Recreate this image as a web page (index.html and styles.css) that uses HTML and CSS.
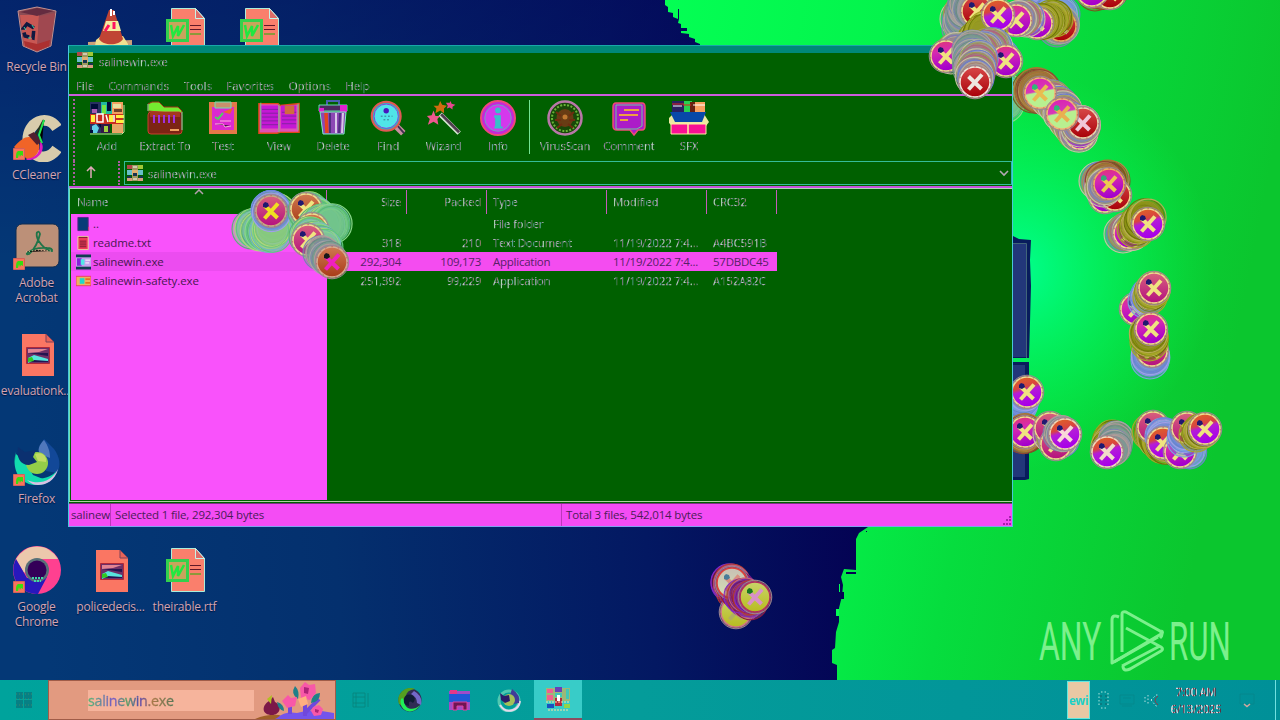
FILE: index.html
```html
<!DOCTYPE html>
<html lang="en">
<head>
<meta charset="utf-8">
<title>salinewin.exe</title>
<link rel="stylesheet" href="styles.css">
</head>
<body>
<svg class="defs" width="0" height="0" aria-hidden="true">
  <defs>
    <linearGradient id="g-violet" x1="0" y1="0" x2=".25" y2="1"><stop offset="0" stop-color="#e0386a"/><stop offset=".4" stop-color="#d62ab0"/><stop offset="1" stop-color="#a400cc"/></linearGradient>
    <linearGradient id="g-orange" x1="0" y1="0" x2=".3" y2="1"><stop offset="0" stop-color="#e06a20"/><stop offset=".42" stop-color="#d84440"/><stop offset=".55" stop-color="#b41cd8"/><stop offset="1" stop-color="#a800e8"/></linearGradient>
    <linearGradient id="g-red" x1="0" y1="0" x2="0" y2="1"><stop offset="0" stop-color="#d84848"/><stop offset="1" stop-color="#a80008"/></linearGradient>
    <linearGradient id="g-mint" x1="0" y1="0" x2=".2" y2="1"><stop offset="0" stop-color="#d820b0"/><stop offset=".5" stop-color="#d838b8"/><stop offset=".56" stop-color="#b8f090"/><stop offset="1" stop-color="#b8f090"/></linearGradient>
    <linearGradient id="g-pink" x1="0" y1="0" x2="0" y2="1"><stop offset="0" stop-color="#d8607c"/><stop offset="1" stop-color="#b41080"/></linearGradient>
    <linearGradient id="g-rust" x1="0" y1="0" x2="0" y2="1"><stop offset="0" stop-color="#d07850"/><stop offset="1" stop-color="#a83c18"/></linearGradient>
    <linearGradient id="g-lime" x1="0" y1="0" x2="0" y2="1"><stop offset="0" stop-color="#c8d468"/><stop offset="1" stop-color="#b8bc20"/></linearGradient>
    <linearGradient id="g-pale" x1="0" y1="0" x2="0" y2="1"><stop offset="0" stop-color="#c8c0b4"/><stop offset="1" stop-color="#d4e0b4"/></linearGradient>

    <symbol id="rar" viewBox="0 0 36 36">
      <path fill="#283060" d="M1 2h11v31H1z"/><path fill="#20b8a0" d="M12 2h11v16H12z"/><path fill="#f4a060" d="M23 2h11v31H23z"/>
      <path fill="#74e444" d="M13 5h4v9h-4z"/><path fill="#000c38" d="M2 4h7v5H2zM18 2h4v9h-4z"/><path fill="#a858b0" d="M3 9h5v4H3z"/>
      <path fill="#e8e0a0" d="M24 4h8v4h-8z"/><path fill="#704028" d="M25 9h8v3h-8z"/><path fill="#c82c20" d="M1 14h33v10H1z"/><path fill="#fff040" d="M2 15h4v7H2zM20 15h4v7h-4zM27 15h8v3h-8zM27 20h8v3h-8z"/>
      <path fill="none" stroke="#fff" stroke-width="1.500" d="M8 14v8h6v-8zM17 15l2 7M25 15v7"/>
      <path fill="#301848" d="M12 24h9v9h-9z"/><path fill="#60d0e8" d="M3 26l4-2 3 4-2 5H3z"/><path fill="#000c38" d="M1 30h3v3H1zM9 24h3v4z"/><path fill="#a0d040" d="M15 26h4v6h-4z"/><path fill="#e4a868" d="M24 25h9v7h-9z"/>
      <path fill="none" stroke="#c0e0a0" d="M1 34h32l2-2V5"/>
    </symbol>
    <symbol id="rar-small" viewBox="0 0 18 18">
      <path fill="#b04848" d="M1 1h5v4H1z"/><path fill="#a0c838" d="M12 1h5v4h-5z"/><path fill="#a09860" d="M6 1h6v16H6z"/>
      <path fill="#68c0c8" d="M1 6h16v5H1z"/><path fill="#e0b070" d="M6 6h6v5H6z"/><path fill="#183450" d="M1 12h4v2H1zM13 12h4v2h-4zM7 9h4v3H7z"/>
      <path fill="#d89c80" d="M1 14h5v3H1zM12 14h5v3h-5z"/><path stroke="#fff" d="M7 3h4M7 15h4"/>
    </symbol>
    <symbol id="writer" viewBox="0 0 48 48">
      <path fill="#fa7f6c" stroke="#a8eedc" d="M10.500 2.500h24l9 10v33h-33z"/><path fill="#e06c68" stroke="#c8f4e8" d="M34.500 2.500v10h9z"/>
      <path stroke="#601828" d="M29 19.500h11M29 23.500h11"/><path stroke="#68a028" stroke-width="1.500" d="M29 28h11"/>
      <path fill="#34d04c" d="M5 13h23v23H5z"/><path fill="#c8a45c" d="M8 16h17v17H8z"/>
      <path fill="none" stroke="#20e840" stroke-width="2.500" d="M10 19l2 11 5-10v10l6-11"/>
    </symbol>
    <symbol id="picture" viewBox="0 0 48 48">
      <path fill="#fa7663" d="M9 4h24l8 8v34H9z"/><path fill="#e86458" stroke="#7c4058" d="M33 4v8h8z"/>
      <path fill="#6c3068" stroke="#b02838" d="M13.500 17.500h23v16h-23z"/><path fill="#e08494" d="M15 19h20l-9 3-11 1z"/>
      <path fill="#241450" d="M15 23l20 3v-3zM15 30h20v2H15z"/><path fill="#58e4dc" d="M15 28l6-3 14 4v2l-14-1-6 3z"/><path fill="#30c820" d="M15 28l4-1 2 4-6 1z"/>
    </symbol>
    <symbol id="shortcut" viewBox="0 0 12 12"><path fill="#f8745c" stroke="#d46058" d="M.5.5h11v11H.5z"/><path fill="#38dc10" d="M3 10C3 6 3 4 5 3h5v5L8 7 7 9 6 6 5 10z"/></symbol>
    <symbol id="fox" viewBox="0 0 48 48">
      <path fill="#124898" d="M31 1l10 10c6 8 7 17 3 24L33 33l-7-18z"/><path fill="#5078bc" d="M31 2c-5 5-7 10-4 14l10 4c0-7-2-12-6-18z"/>
      <path fill="#12dcae" d="M3 14c-2 17 8 27 20 27 10 0 18-4 20-8-3 12-13 14-20 14C6 47-2 30 3 14z"/>
      <path fill="#12dcae" d="M3 16l11 10 6 11 10 4-12 3C6 39 1 29 3 16z"/>
      <path fill="#d8c0e4" d="M14 42c12 5 24 2 31-11-3 12-12 16-20 16-4 0-8-2-11-5z"/>
      <circle cx="24" cy="25" r="11" fill="#94ce48"/><path fill="#0b3070" d="M5 9l7 5 11-2-3 7 4 5-8 3C7 27 3 19 5 9z"/><path fill="#c0dc64" d="M22 16c8-3 12 3 11 8l-8-1z"/>
    </symbol>
    <symbol id="fox-small" viewBox="0 0 24 24">
      <circle cx="12" cy="13" r="10" fill="none" stroke="#50c8b0" stroke-width="3"/><path fill="none" stroke="#e4d8ec" stroke-width="2" d="M3 17q5 8 13 5 6-2 7-9"/>
      <path fill="#403c98" d="M15 1q9 6 7 14l-6 1-3-9z"/><circle cx="12" cy="12" r="6" fill="#a4c058"/><path fill="#2c1c68" d="M3 5l4 3 5-1 1 6-5 2-4-3z"/>
    </symbol>
  </defs>
</svg>

<div class="screen">
  <main class="desktop">
    <svg class="wallpaper" viewBox="0 0 1280 680" aria-hidden="true">
      <defs>
        <linearGradient id="blue" x1="0" y1="0" x2="840" y2="-60" gradientUnits="userSpaceOnUse"><stop offset="0" stop-color="#043876"/><stop offset=".35" stop-color="#04306e"/><stop offset=".72" stop-color="#031862"/><stop offset="1" stop-color="#040052"/></linearGradient>
        <linearGradient id="top" x1="0" y1="0" x2="0" y2="1"><stop offset="0" stop-color="#040058" stop-opacity=".35"/><stop offset="1" stop-color="#040058" stop-opacity="0"/></linearGradient>
        <linearGradient id="green" x1="660" y1="0" x2="1280" y2="120" gradientUnits="userSpaceOnUse"><stop offset="0" stop-color="#04ff54"/><stop offset=".35" stop-color="#04f44c"/><stop offset=".62" stop-color="#06dd3e"/><stop offset="1" stop-color="#0bc62e"/></linearGradient>
        <radialGradient id="glow" cx="1015" cy="270" r="200" gradientUnits="userSpaceOnUse"><stop offset="0" stop-color="#00ff90"/><stop offset="1" stop-color="#00ff50" stop-opacity="0"/></radialGradient>
      </defs>
      <path fill="url(#blue)" d="M0 0h1280v680H0z"/><path fill="url(#top)" d="M0 0h1280v260H0z"/>
      <path fill="url(#green)" d="M665 0v5l3 2v5l5 1v4l5 2v-10h1v10l-1 4 3 1v4h6v3h-6v2l8 1v3l6 2v3l5 2v3l6 2V300H868V527L862 531 859 533 856 539 856 570 844 569 841 577 843 585 842 596 839 608 839 622 836 632 835 648 832 650 832 663 837 665 837 680H1280V0z"/>
      <path fill="#040052" d="M846 572h10v2h-10zM841 592h3v7h-3zM862 528h2v1h-2zM866 531h1v1h-1z"/><path fill="#04ff54" d="M839 584h1v8h-1zM836 609h3v7h-3z"/>
      <path fill="url(#glow)" d="M868 45h412v440H868z"/>
      <path fill="#081c5c" d="M1013 236l6 3 12 1-1 20 1 26-1 36-1 36h-16zM1013 362h16v117l-4 1h-12z"/><path fill="#22377a" d="M1013 243h13v114h-13zM1013 365h12v112h-12z"/><path fill="none" stroke="#416579" d="M1013 243.500h13.500V358"/>
    </svg>

    <section class="icons">
      <div class="tile c1 r1"><svg viewBox="0 0 48 48"><path fill="#8c4c54" stroke="#c09090" d="M5 5l19-4 19 4-5 35-14 6-14-6z"/><path fill="#c85854" d="M7 9h19l-2 36-13-5z"/><path fill="#a04850" d="M26 10l16-3-5 33-13 5z"/><path fill="#642c40" d="M7 6l17-4 17 3-17 5z"/><path fill="#ac3030" d="M11 35l13 3 13-4-1 6-12 5-12-5z"/><path fill="none" stroke="#101840" stroke-width="3.500" stroke-dasharray="8 3" d="M14 18l7 4-1 10-8-2-2-7z"/><path stroke="#38d0a0" d="M11 21l2 3M19 19l2 3M15 32h3"/></svg><span>Recycle Bin</span></div>
      <div class="tile c2 r1"><svg viewBox="0 0 48 48"><path fill="#cca078" d="M1 36l44-2v10H1z"/><path fill="#f0e090" d="M9 34l5-4h22l5 8v8H7z"/><path fill="#c04434" d="M22 4h5l9 29c-4 7-20 7-24 0z"/><path fill="#f4eca0" d="M19 15h12l3 10H16z"/><path stroke="#ff1060" stroke-width="3" d="M27 16v7M18 25l4-6"/><path stroke="#fff" stroke-width="2" d="M24 3v7M27 5v4"/></svg></div>
      <div class="tile c3 r1"><svg><use href="#writer"/></svg></div>
      <div class="tile c4 r1"><svg><use href="#writer"/></svg></div>
      <div class="tile c1 r2"><svg viewBox="0 0 48 48"><path fill="none" stroke="#d8ccac" stroke-width="11" d="M44 14C34-1 14 8 15 27c3 18 20 21 29 8"/><path fill="#f06428" d="M1 33c9-10 14-12 21-8 9 5 3 19-7 21z"/><path fill="#dc1cc0" d="M13 45c11-1 15-8 14-18 7 6 0 20-13 19z"/><path stroke="#24341c" stroke-width="2.500" d="M31 6L21 24"/><path fill="#502030" d="M15 21l6-3 8 9-5 4z"/><path stroke="#20e850" stroke-width="2" d="M31 6l-5 15 3 8"/><use href="#shortcut" x="0" y="34" width="12" height="12"/></svg><span>CCleaner</span></div>
      <div class="tile c1 r3"><svg viewBox="0 0 48 48"><rect x="3" y="2" width="43" height="43" rx="6" fill="#bc9078" stroke="#102c50"/><path fill="none" stroke="#207448" stroke-width="1.800" d="M24 11q2-3 3 1-1 5-4 11-3 6-7 9-3 1-2-1 8-6 20-5 6 0 5 3-7 0-14-11-2-5-1-8z"/><path stroke="#f0c8a0" stroke-dasharray="1 2" d="M13 30l11-2 14 1"/><use href="#shortcut" x="0" y="36" width="12" height="12"/></svg><span>Adobe<br>Acrobat</span></div>
      <div class="tile c1 r4"><svg><use href="#picture"/></svg><span>evaluationk...</span></div>
      <div class="tile c1 r5"><svg viewBox="0 0 48 48"><use href="#fox"/><use href="#shortcut" x="0" y="36" width="12" height="12"/></svg><span>Firefox</span></div>
      <div class="tile c1 r6"><svg viewBox="0 0 48 48"><circle cx="24" cy="24" r="24" fill="#ff4090"/><path fill="#ecc8ac" d="M3 13A24 24 0 0 1 45 13H24L11 27z"/><path fill="#2818bc" d="M3 13A24 24 0 0 0 25 48l9-17-20 1z"/><circle cx="24" cy="24" r="12" fill="#587078"/><circle cx="24" cy="24" r="9.500" fill="#340058"/><path stroke="#40d8a8" stroke-width="2" stroke-dasharray="2 1" d="M19 32h11M21 35h7"/><use href="#shortcut" x="0" y="35" width="12" height="12"/></svg><span>Google<br>Chrome</span></div>
      <div class="tile c2 r6"><svg><use href="#picture"/></svg><span>policedecis...</span></div>
      <div class="tile c3 r6"><svg><use href="#writer"/></svg><span>theirable.rtf</span></div>
    </section>

    <svg class="coins" id="coins-behind" viewBox="0 0 1280 680" aria-hidden="true"></svg>

    <section class="window">
      <header class="titlebar"><svg><use href="#rar-small"/></svg><span class="noise">salinewin.exe</span></header>
      <nav class="menu"><span class="noise">File</span><span class="noise">Commands</span><span class="noise">Tools</span><span class="noise">Favorites</span><span class="noise">Options</span><span class="noise">Help</span></nav>
      <div class="toolbar">
        <div class="tool"><svg><use href="#rar"/></svg><span class="noise">Add</span></div>
        <div class="tool"><svg viewBox="0 0 36 36"><path fill="#74ec30" stroke="#a03018" d="M1 11V4l4-2h7l5 5h14l4 4v3z"/><rect x="1" y="12" width="34" height="22" rx="3" fill="#7c2414" stroke="#c8402c"/><path fill="#a43820" d="M3 12h30v5H3z"/><path stroke="#a030e0" stroke-width="2" d="M7 15v8M12 15v8M17 15v8M22 15v8M27 15v8"/><path stroke="#f0a060" stroke-width="2" d="M23 30h9"/><path fill="none" stroke="#70d8a8" d="M1 11V4M35 12v18"/></svg><span class="noise">Extract To</span></div>
        <div class="tool"><svg viewBox="0 0 36 36"><path fill="#e47848" d="M4 2h28v32H4z"/><path fill="#dc28d0" d="M7 7h22v23H7z"/><path fill="#c8906c" stroke="#70e0b0" d="M10 2h16v6H10z"/><path fill="none" stroke="#50d060" stroke-width="2" d="M10 17l3 2 5-6"/><path stroke="#ffb0e0" d="M10 24h8l2 3 6-1M15 21h11"/><path fill="#f06030" d="M18 12l10-4-3 6z"/></svg><span class="noise">Test</span></div>
        <div class="tool"><svg class="wide" viewBox="0 0 46 36"><path fill="#e050b8" stroke="#e04818" stroke-width="1.500" d="M2 3h20l2 2 20-2v30H24l-3 1H2z"/><path fill="#c418d4" d="M4 5h18v24H4zM25 5h16v24H25z"/><path stroke="#8024a0" d="M5 9h17M5 13h17M5 17h17M5 21h17M5 25h17M26 12h15M26 16h15M26 20h15M26 24h15"/><path fill="#d06c40" d="M29 5h10v9H29z"/><path stroke="#70d080" d="M4 2v28M23 4v29M43 3v28"/></svg><span class="noise">View</span></div>
        <div class="tool"><svg viewBox="0 0 36 36"><path fill="none" stroke="#4860b0" stroke-width="2" d="M12 5V1h12v4"/><path fill="#4c2860" stroke="#68d8b0" d="M4 5h28v6H4z"/><path fill="#e020d0" d="M25 5h7v7h-7zM4 8h5v4H4z"/><path fill="#8c48b4" stroke="#84e8c8" d="M5 12h26l-2 22H8z"/><path stroke="#e4441c" stroke-width="3.500" d="M11 13l1 20"/><path stroke="#503080" stroke-width="2" d="M15 13v20M25 13l-1 20"/><path stroke="#d8c8e8" stroke-width="2" d="M21 13v20M28 13l-1 20"/></svg><span class="noise">Delete</span></div>
        <div class="tool"><svg viewBox="0 0 40 38"><path stroke="#c890a0" stroke-width="7" d="M28 27l9 9"/><path stroke="#403050" stroke-width="2" d="M30 27l8 9"/><circle cx="18" cy="17" r="16" fill="#18c8cc" stroke="#e05854" stroke-width="2.500"/><circle cx="18" cy="17" r="13.500" fill="#50e4e8" stroke="#9828d8"/><circle cx="18" cy="11" r="3" fill="#4814c0"/><path stroke="#386888" stroke-dasharray="2 2" d="M12 17h13M15 21h7"/></svg><span class="noise">Find</span></div>
        <div class="tool"><svg viewBox="0 0 38 38"><path stroke="#d8e8d4" stroke-width="5" d="M15 15l20 20"/><path stroke="#504050" stroke-width="3" d="M16 15l19 19"/><path fill="#f05890" d="M8 11l2 6h5l-3 3 1 6-5-3-6 3 2-6-3-3 5-1z"/><path fill="#d06c10" d="M15 1l2 4 5 1-3 3v5l-4-3-5 3 1-5-3-3h5z"/><path fill="#e84890" d="M26 1l1 3 4 1-3 2v3l-3-2-3 1 1-3-2-3h4z"/></svg><span class="noise">Wizard</span></div>
        <div class="tool"><svg viewBox="0 0 38 38"><circle cx="19" cy="19" r="18" fill="#c428d8" stroke="#f04878" stroke-width="2"/><circle cx="19" cy="19" r="14" fill="#d438ec" stroke="#70a0c8"/><circle cx="19" cy="11" r="3" fill="#38c0c8"/><path fill="#38c0c8" d="M15 16h7v12h2v2h-9v-2h1v-9h-1z"/></svg><span class="noise">Info</span></div>
        <i class="divider"></i>
        <div class="tool"><svg viewBox="0 0 36 36"><circle cx="18" cy="18" r="16.500" fill="#184808" stroke="#b878a8" stroke-width="2.500"/><circle cx="18" cy="18" r="13" fill="none" stroke="#68b438" stroke-width="2" stroke-dasharray="2 1.500"/><ellipse cx="18" cy="18" rx="8.500" ry="9" fill="#683c14"/><path stroke="#702c10" stroke-width="2" d="M9 12l5 4M27 12l-5 4M8 20h6M28 20h-6M10 28l5-4M26 28l-5-4"/><circle cx="18" cy="17" r="2.500" fill="#c07830"/></svg><span class="noise">VirusScan</span></div>
        <div class="tool"><svg viewBox="0 0 36 36"><path fill="#ac1cc8" stroke="#f04c74" stroke-width="1.500" d="M5 3h26q3 0 3 4v19q0 4-3 4h-4l-4 5-4-5H6q-4 0-4-4V7q0-4 3-4z"/><path fill="none" stroke="#70c8a0" d="M5 5h26v21l-5 3H5z"/><path stroke="#f0a040" stroke-width="2" d="M13 10h15M8 15h19M9 20h8"/></svg><span class="noise">Comment</span></div>
        <div class="tool"><svg class="wide" viewBox="0 0 42 36"><path fill="#282060" d="M4 1h12v13H4z"/><path fill="#28d050" d="M16 1h8v12h-8z"/><path fill="#682010" d="M22 2h6v12h-6z"/><path fill="#f8a060" d="M27 2h10v13H27z"/><path fill="#ece8a0" d="M1 18l5-5 30 1 5 8-3 4H4l-3-3z"/><path fill="#0848a8" d="M2 12h36l-4 10H7z"/><path fill="#f81094" stroke="#fff0a0" d="M3 24h17v10H3zM20 24h18v10H20z"/><path stroke="#e02020" d="M4 4h12M15 5h8"/><path stroke="#fff" d="M5 6h9M25 5h12"/></svg><span class="noise">SFX</span></div>
      </div>
      <div class="pathbar">
        <div class="up"><svg viewBox="0 0 12 12"><path fill="none" stroke="#e0a8b8" stroke-width="1.500" d="M6 12V2M2 5l4-4 4 4"/></svg></div>
        <div class="address"><svg><use href="#rar-small"/></svg><span class="noise">salinewin.exe</span><svg class="chevron" viewBox="0 0 12 12"><path fill="none" stroke="#b4a8b4" stroke-width="1.600" d="M2 4l4 4 4-4"/></svg></div>
      </div>
      <div class="files">
        <div class="row head noise-cells"><span>Name</span><span>Size</span><span>Packed</span><span>Type</span><span>Modified</span><span>CRC32</span></div>
        <svg class="sort" viewBox="0 0 10 6"><path fill="none" stroke="#b4a0ac" stroke-width="1.500" d="M1 5l4-4 4 4"/></svg>
        <div class="row noise-cells"><span class="name"><svg viewBox="0 0 16 16"><path fill="#083c78" stroke="#582888" d="M2 1h11v14H2z"/><path stroke="#e04070" d="M13.500 11v4"/></svg>..</span><span></span><span></span><span>File folder</span><span></span><span></span></div>
        <div class="row noise-cells"><span class="name"><svg viewBox="0 0 16 16"><path fill="#f03858" stroke="#e8d8a0" d="M2 1h11v14H2z"/><path stroke="#701c30" d="M3 2h9M4 6h7M4 8h7M4 10h7M4 12h7"/></svg>readme.txt</span><span>318</span><span>210</span><span>Text Document</span><span>11/19/2022 7:4...</span><span>A4BC591B</span></div>
        <div class="row selected"><span class="name"><svg viewBox="0 0 16 16"><path fill="#103c50" d="M0 0h16v16H0z"/><path fill="#c8a0ec" d="M0 3h16v10H0z"/><path fill="#8820d8" d="M1 4h5v8H1z"/><path fill="#50e8e8" d="M5 5h4v6H5z"/><path stroke="#fff" d="M10 6h5M10 9h4"/></svg>salinewin.exe</span><span>292,304</span><span>109,173</span><span>Application</span><span>11/19/2022 7:4...</span><span>57DBDC45</span></div>
        <div class="row noise-cells"><span class="name"><svg viewBox="0 0 16 16"><path fill="#f0b060" stroke="#e84060" d="M0 3h16v10H0z"/><path fill="#20d8c8" d="M4 5h5v6H4z"/><path fill="#e87020" d="M10 5h5v2h-5zM10 9h5v2h-5z"/></svg>salinewin-safety.exe</span><span>251,392</span><span>99,229</span><span>Application</span><span>11/19/2022 7:4...</span><span>A152A82C</span></div>
      </div>
      <footer class="status"><span>salinew</span><span>Selected 1 file, 292,304 bytes</span><span>Total 3 files, 542,014 bytes</span><svg viewBox="0 0 10 10"><path fill="#a820b0" d="M7 0h2v2H7zM4 3h2v2H4zM7 3h2v2H7zM1 7h2v2H1zM4 7h2v2H4zM7 7h2v2H7z"/></svg></footer>
    </section>

    <svg class="coins over" id="coins-over" viewBox="0 0 1280 680" aria-hidden="true"></svg>

    <svg class="brand" viewBox="0 0 200 64" role="img" aria-label="ANY RUN">
      <g transform="translate(5 52) scale(.6 1)"><text textLength="104" lengthAdjust="spacingAndGlyphs">ANY</text></g>
      <g transform="translate(135 52) scale(.6 1)"><text textLength="103" lengthAdjust="spacingAndGlyphs">RUN</text></g>
      <path d="M85 9q-7-3-7 3v43l49-29q3-2 0-3"/>
      <path d="M80 54l44-25M88 44V6q0-3 4-2l34 19q4 3 0 7M92 20l35 19q3 2 0 4l-31 18q-7 3-7-3M88 58l38-20"/>
    </svg>
  </main>

  <footer class="taskbar">
    <button class="start" aria-label="Start"><svg viewBox="0 0 18 18"><path fill="#078084" d="M1 1h7v7H1zM9 1h8v7H9zM1 9h7v8H1zM9 9h8v8H9z"/><path stroke="#40886c" stroke-dasharray="1 2" d="M1 3h16M1 8h16M1 14h16"/></svg></button>
    <div class="search"><span class="query"><span>salinewin.exe</span></span>
      <svg class="flowers" viewBox="0 0 80 38"><path fill="#a06028" d="M0 38q12-5 24-4l8 4z"/><path fill="#7454ec" d="M22 37q8-7 20-5 14-5 37 0v6H20z"/><path fill="#7c1848" d="M14 20l4-4 2 5c8 4 5 13-3 13-10 0-11-9-3-14z"/><path fill="#b0c020" d="M12 18l5-4-1 9z"/><path fill="none" stroke="#7048dc" stroke-width="4" d="M35 20v13M50 35V14M50 32l14-14"/><path fill="#208088" d="M40 5q-5 8 3 13 2-8-3-13zM56 22q1-10 9-10 0 9-9 10zM22 21q1 8 7 9 0-7-7-9z"/><path fill="#f858a8" d="M45 7l5-6 4 3 6-1 1 9-6 7-9-2zM27 20l6-6 3 3 6-1-2 9-8 2zM58 26l6-2 4 4-2 6-7 1-3-5z"/><path fill="#b02478" d="M49 6l5 1-1 6-4-1zM60 28l4 1-1 3-3-1z"/><path fill="#ffb080" d="M43 18l8-3 2 8-7 3z"/></svg>
    </div>
    <div class="apps">
      <span class="app"><svg viewBox="0 0 24 24"><path fill="none" stroke="#08847c" stroke-width=".8" d="M4 5h12v14H4zM4 9h12M4 15h12M19 5v14M7 5v14"/></svg></span>
      <span class="app"><svg viewBox="0 0 24 24"><circle cx="12" cy="12" r="11.500" fill="#302c54"/><path fill="#54a020" d="M1 16A12 12 0 0 1 17 1q-9 1-9 8-4 2-3 9z"/><path fill="#20f058" d="M6 14c2 8 10 9 16 3-4 8-16 9-19 0-2-8 3-9 3-3z"/><path fill="#7468c8" d="M16 3q9 5 7 14l-4-2q0-6-6-9z"/><path fill="#101c34" d="M6 11q1-6 8-4 5 3 1 8-5-4-4 3-6-1-5-7z"/></svg></span>
      <span class="app"><svg viewBox="0 0 24 24"><path fill="#a04cc8" d="M1 3h21v19H1z"/><path fill="#2058d8" d="M1 6h21v8H1z"/><path fill="#e43888" d="M2 2h7v4H2z"/><path fill="#701454" stroke="#e040a0" d="M5 14h14v8h-4v-4H9v4H5z"/></svg></span>
      <span class="app"><svg><use href="#fox-small"/></svg></span>
      <span class="app active"><svg viewBox="0 0 24 24"><path fill="#9cb878" d="M0 1h24v13H0z"/><path fill="#f06090" d="M1 2h6v4H1zM1 8h6v5H1z"/><path fill="#6840b8" d="M9 0h7v5H9z"/><path fill="#40c8b8" d="M9 6h7v4H9zM20 2h3v10h-3z"/><path fill="#b02840" d="M9 11h7v8H9z"/><path fill="#fff" d="M11 8h3v6h-3z"/><path fill="#1850c0" d="M1 17h7v4H1z"/><path fill="#94d448" d="M18 17h6v4h-6z"/><path stroke="#ffe0a0" stroke-dasharray="2 1" d="M0 15h24M2 23h20"/></svg></span>
    </div>
    <div class="tray">
      <span class="preview">ewi</span>
      <svg class="t1" viewBox="0 0 14 18"><path fill="none" stroke="#a8e4dc" stroke-dasharray="1.500 2" d="M3 2v14M5 1h6M5 17h6M12 2v14"/><path stroke="#146068" stroke-dasharray="2 2" d="M5 4v11M10 4v11"/></svg>
      <svg class="t2" viewBox="0 0 18 14"><path fill="none" stroke="#06868a" stroke-width=".7" d="M2 2h14v9H2zM4 13h10M5 5h8"/></svg>
      <svg class="t3" viewBox="0 0 18 18"><path fill="none" stroke="#b4dce0" stroke-dasharray="1.500 2" d="M2 6v7M5 4v10M8 9l5-5h2M8 9l5 6h2"/><path fill="none" stroke="#903848" d="M15 5q-6 4 0 9"/></svg>
      <div class="clock"><span>7:00 AM</span><span>6/13/2025</span></div>
      <svg class="t4" viewBox="0 0 18 18"><path fill="none" stroke="#05858a" stroke-width=".8" d="M2 3h14v10H2z"/><path fill="none" stroke="#d4a8a0" stroke-width="1.500" d="M6 13l3 2.500 3-2.500"/></svg>
      <i class="peek"></i>
    </div>
  </footer>
</div>
<script src="coins.js"></script>
</body>
</html>
```

FILE: styles.css
```css
* { box-sizing: border-box; }
body { margin: 0; overflow: hidden; font: 12px/15px "Open Sans", "Noto Sans", sans-serif; }
.defs { position: absolute; }
svg { display: block; }

.screen { width: 1280px; height: 720px; display: flex; flex-direction: column; overflow: hidden; }
.desktop { position: relative; height: 680px; overflow: hidden; background: #043876; }
.wallpaper, .coins { position: absolute; inset: 0; width: 1280px; height: 680px; }
.coins { overflow: hidden; pointer-events: none; }

/* desktop icons */
.icons { position: relative; display: grid; grid-template-columns: 73px 75px 73px 76px; grid-template-rows: repeat(6, 108px); padding-top: 6px; }
.tile { display: flex; flex-direction: column; align-items: center; gap: 5px; color: #d4a4b0; text-align: center; white-space: nowrap; text-shadow: 0 1px 1px #001440; }
.tile svg { width: 48px; height: 48px; }
.tile span { letter-spacing: -.2px; }
.c1 { grid-column: 1; } .c2 { grid-column: 2; } .c3 { grid-column: 3; } .c4 { grid-column: 4; }
.r1 { grid-row: 1; } .r2 { grid-row: 2; } .r3 { grid-row: 3; } .r4 { grid-row: 4; } .r5 { grid-row: 5; } .r6 { grid-row: 6; }

/* archive window */
.window { position: absolute; left: 68px; top: 45px; width: 945px; height: 482px; display: flex; flex-direction: column; background: #006000; border: 1px solid #48c8d8; border-top-color: #18a8a8; border-bottom-color: #80a0f0; font-size: 11.5px; letter-spacing: -.25px; white-space: nowrap; }
.noise, .noise-cells > span:not(.name) { color: transparent; background: repeating-linear-gradient(90deg, #b8dcc0 0 1px, #9880a4 1px 2px, #307440 2px 3px, #b08484 3px 4px, #58a898 4px 5px, #307048 5px 6px, #a89cb8 6px 7px); background-clip: text; -webkit-background-clip: text; -webkit-text-stroke: .25px transparent; }
.titlebar { height: 31px; flex: none; display: flex; align-items: center; gap: 5px; padding: 0 7px; background: linear-gradient(#008878 7px, #006000 7px); }
.titlebar svg { width: 18px; height: 18px; margin-top: -3px; }
.titlebar span { margin-top: -1px; }
.menu { height: 17px; flex: none; display: flex; gap: 14.5px; padding-left: 7px; line-height: 17px; letter-spacing: -.08px; }
.toolbar { height: 67px; flex: none; display: grid; grid-template-columns: 58px 58px 58px 54px 54px 56px 55px 54px 8px 64px 64px 56px; padding: 6px 0 0 3px; margin-left: 4px; position: relative; border-left: 2px dotted #a85ca0; }
.toolbar::before { content: ""; position: absolute; left: -6px; top: 0; width: 943px; height: 2px; background: #cc5cdc; }
.tool { display: flex; flex-direction: column; align-items: center; }
.tool svg { width: 36px; height: 36px; flex: none; }
.tool .wide { width: 44px; }
.tool span { margin-top: 2px; }
.divider { width: 1px; height: 54px; margin: 0 auto; background: #74e494; }
.pathbar { height: 24px; flex: none; display: flex; margin-left: 4px; border-left: 2px dotted #a85ca0; }
.up { width: 45px; border-right: 2px dotted #a85ca0; display: grid; place-items: center; }
.up svg { width: 12px; height: 12px; margin: -2px 12px 0 0; }
.address { flex: 1; margin-left: 4px; border: 1px solid #34bc98; border-right-color: #24b8b8; display: flex; align-items: center; gap: 4px; padding: 0 1px; }
.address svg { width: 18px; height: 18px; }
.address .chevron { width: 12px; height: 12px; margin-left: auto; }

.files { height: 316px; flex: none; position: relative; border-top: 3px solid #c850dc; border-left: 1px solid #70e0b0; padding-left: 1px; margin-top: 1px; background: linear-gradient(#f952fb, #f952fb) 1px 25px / 256px 286px no-repeat #006000; border-bottom: 1px solid #b0d0a0; }
.files::before { content: ""; position: absolute; left: 0; right: 0; top: -1px; height: 1px; background: #a8d8b0; }
.row { display: grid; grid-template-columns: 256px 80px 80px 120px 100px 70px; width: 706px; height: 19px; line-height: 19px; }
.row > span { padding: 0 0 0 6px; overflow: hidden; }
.row > span:nth-child(2), .row > span:nth-child(3) { text-align: right; padding: 0 6px 0 0; }
.row .name { display: flex; align-items: center; gap: 2px; padding-left: 5px; color: #481850; letter-spacing: -.1px; }
.row .name svg { width: 15px; height: 16px; }
.head { height: 25px; line-height: 25px; background: linear-gradient(#c45cb8, #c45cb8) 255px 1px / 1px 24px no-repeat, linear-gradient(#c45cb8, #c45cb8) 335px 1px / 1px 24px no-repeat, linear-gradient(#c45cb8, #c45cb8) 415px 1px / 1px 24px no-repeat, linear-gradient(#c45cb8, #c45cb8) 535px 1px / 1px 24px no-repeat, linear-gradient(#c45cb8, #c45cb8) 635px 1px / 1px 24px no-repeat, linear-gradient(#c45cb8, #c45cb8) 705px 1px / 1px 24px no-repeat; }
.selected { background: #f44cf0; color: #582068; }
.selected > .name { background: #ec4cf0; }
.sort { position: absolute; left: 124px; top: 0; width: 10px; height: 6px; }
.status { flex: 1; display: grid; grid-template-columns: 42px 451px 1fr 10px; align-items: center; margin-top: 1px; background: #f44cf4; border-top: 1px solid #7c3480; color: #4c1c58; line-height: 22px; letter-spacing: -.17px; }
.status span { padding-left: 4px; border-right: 1px solid #bc38bc; overflow: hidden; height: 22px; }
.status span:first-child { padding-left: 2px; }
.status span:nth-child(3) { border: 0; padding-left: 4px; }
.status svg { width: 10px; height: 10px; align-self: end; }

.brand { position: absolute; left: 1034px; top: 608px; width: 200px; height: 64px; overflow: visible; }
.brand text { font: 400 54px Roboto, sans-serif; fill: #7cf08c; }
.brand path { fill: none; stroke: #7cf08c; stroke-width: 3; stroke-linejoin: round; }

/* taskbar */
.taskbar { height: 40px; display: flex; background: linear-gradient(90deg, #00a39c, #049c9a 50%, #009098); }
.start { width: 48px; border: 0; padding: 0; background: none; display: grid; place-items: center; }
.start svg { width: 18px; height: 18px; }
.search { width: 288px; display: flex; align-items: center; padding-left: 39px; background: #e29a80; border: 1px solid #a05c48; }
.query { width: 166px; height: 21px; flex: none; background: #f6b49c; font-size: 14.3px; line-height: 21px; letter-spacing: -.3px; }
.query span { color: transparent; background: linear-gradient(90deg, #58b870, #7858c8 30%, #58a060 45%, #5848b0 60%, #a87848 75%, #587858); background-clip: text; -webkit-background-clip: text; -webkit-text-stroke: .3px transparent; }
.flowers { width: 80px; height: 38px; margin-left: 1px; }
.apps { display: flex; }
.app { width: 49.500px; display: grid; place-items: center; }
.app svg { width: 24px; height: 24px; }
.app.active { width: 48px; background: #38ccc8; border-bottom: 2px solid #8c4c60; }
.tray { margin-left: auto; display: flex; align-items: center; position: relative; width: 213px; }
.preview { width: 23px; height: 38px; overflow: hidden; background: #e8c8a4; border: 1px solid #60e8e0; color: #18d0c8; font-weight: 700; font-size: 11.5px; line-height: 38px; text-align: center; letter-spacing: -.3px; }
.t1 { width: 14px; height: 18px; margin-left: 6px; }
.t2 { width: 18px; height: 14px; margin-left: 8px; }
.t3 { width: 18px; height: 18px; margin-left: 7px; }
.clock { width: 68px; margin-left: 1px; display: flex; flex-direction: column; align-items: center; gap: 2px; font-size: 11.500px; letter-spacing: -.4px; }
.clock span { color: transparent; background: repeating-linear-gradient(90deg, #e8dce0 0 2px, #902c40 2px 3px, #b8a0a8 3px 4px, #602838 4px 5px); background-clip: text; -webkit-background-clip: text; -webkit-text-stroke: .4px transparent; }
.t4 { width: 18px; height: 18px; margin-left: 8px; }
.peek { position: absolute; right: 4px; top: 0; width: 1px; height: 40px; background: #70e0e0; }
```

FILE: coins.js
```js
const NS = "http://www.w3.org/2000/svg";
const tones = {
  mix: ["#8c94a0", "#c8c0a4", "#6c7ccc", "#a07868", "#9ca050", "#b46080"],
  gray: ["#78a090", "#7884b0", "#a8a8a0", "#6c8c84", "#b09c98"],
  blue: ["#6c88e0", "#7ca4dc", "#6884c8", "#a0a0e8"],
  olive: ["#8c9810", "#a8a828", "#6c7408", "#b8ac54"],
  brown: ["#a87830", "#705c20", "#b88c54", "#8c4830"],
  mint: ["#8cd88c", "#58b078", "#b0d878", "#74b8c0", "#60c878"],
  hot: ["#8c1840", "#8028c8", "#b03c30", "#581898", "#c06080"]
};

function add(parent, tag, attrs) {
  const el = document.createElementNS(NS, tag);
  for (const key in attrs) el.setAttribute(key, attrs[key]);
  parent.appendChild(el);
  return el;
}

// A smear of overlapping rings from one point to another.
function trail(layer, x1, y1, x2, y2, tone, r = 19) {
  const n = Math.max(6, Math.round(Math.hypot(x2 - x1, y2 - y1) / 1.6));
  const palette = tones[tone];
  for (let i = 0; i <= n; i++) {
    const t = i / n;
    const cx = x1 + (x2 - x1) * t + Math.sin(i * 2) * 1.2;
    const cy = y1 + (y2 - y1) * t + Math.cos(i * 3);
    const radius = r - (i % 3);
    add(layer, "circle", { cx, cy, r: radius, fill: palette[i % palette.length], "fill-opacity": .4, stroke: palette[(i + 1) % palette.length], "stroke-width": 1.1 });
    add(layer, "circle", { cx, cy, r: radius - 2.5, fill: "none", stroke: palette[(i + 2) % palette.length], "stroke-width": .8 });
  }
}

function coin(layer, x, y, fill, rim = "#f0dc90", cross = "#f0e480", spot = "#201870") {
  const g = add(layer, "g", { transform: `translate(${x} ${y})` });
  add(g, "circle", { r: 16.8, fill: "#908078", "fill-opacity": .5, stroke: "#a08890", "stroke-width": 1 });
  add(g, "circle", { r: 15, fill: `url(#g-${fill})`, stroke: rim, "stroke-width": 1.5 });
  add(g, "circle", { r: 15.4, fill: "none", stroke: "#c05058", "stroke-width": .8, "stroke-dasharray": "1.5 5" });
  add(g, "path", { d: "M-6.500 -5.500L6.500 7M7 -7.500L-6.500 7.500", stroke: cross, "stroke-width": 4 });
  if (spot) add(g, "path", { d: "M-8 -7l2-2 3 1 1 3-3 2-3-1z", fill: spot });
}

const behind = document.getElementById("coins-behind");
const over = document.getElementById("coins-over");

const behindItems = [
  ["t", 1003, 90, 1006, 104, "mint"], ["t", 1034, 90, 1040, 91, "brown", 22],
  ["t", 1050, 98, 1064, 110, "mix"], ["t", 1062, 112, 1080, 134, "mix"], ["c", 1080, 134, "violet"], ["t", 1080, 127, 1082, 124, "mix"],
  ["c", 1083, 123, "red", "#e8d8b0", "#f0c8d8", null], ["c", 1040, 93, "mint", "#f0b878", "#e8bc50", "#30b878"], ["c", 1062, 114, "mint", "#f0b878", "#e8b050", "#30b878"],
  ["t", 1098, 180, 1110, 192, "mix"], ["t", 1111, 180, 1105, 180, "brown"], ["c", 1105, 197, "violet"], ["c", 1115, 195, "red"], ["t", 1103, 188, 1106, 186, "mix", 18], ["c", 1109, 184, "violet", "#f0b060", "#ecc850", "#38a878"],
  ["t", 1123, 233, 1132, 231, "mix"], ["c", 1129, 233, "violet"], ["t", 1136, 228, 1147, 217, "olive"], ["c", 1148, 224, "orange"],
  ["c", 1136, 309, "violet"], ["t", 1145, 300, 1152, 291, "blue", 17], ["t", 1150, 296, 1154, 288, "olive", 17], ["c", 1154, 288, "pink"],
  ["t", 1150, 359, 1151, 355, "blue"], ["c", 1152, 351, "pink"], ["t", 1149, 341, 1149, 333, "olive"], ["c", 1151, 329, "violet"],
  ["t", 1018, 410, 1025, 393, "blue", 17], ["c", 1027, 392, "orange"], ["t", 1026, 433, 1024, 434, "brown"], ["c", 1025, 432, "violet"],
  ["t", 1052, 433, 1060, 440, "mix"], ["c", 1050, 428, "pink"], ["c", 1056, 444, "pink"], ["t", 1060, 433, 1064, 434, "gray", 17], ["c", 1065, 434, "orange", "#f0d8b8", "#f8d8d8"],
  ["t", 1112, 437, 1109, 448, "olive", 18], ["t", 1116, 437, 1114, 450, "gray", 17], ["c", 1107, 452, "orange", "#f0dcc0", "#f0dcc8"],
  ["t", 1153, 434, 1190, 451, "blue", 18], ["t", 1151, 431, 1165, 446, "olive", 19], ["c", 1153, 427, "pink"], ["t", 1163, 435, 1166, 440, "blue", 18], ["c", 1163, 443, "orange"],
  ["c", 1180, 452, "violet"], ["t", 1184, 439, 1186, 432, "blue", 17], ["c", 1187, 428, "pink"], ["t", 1196, 434, 1204, 430, "olive", 17], ["c", 1205, 429, "orange"]
];
const overItems = [
  ["t", 1095, -8, 1112, -10, "brown", 18], ["c", 1110, -7, "red"], ["c", 1092, -9, "violet"],
  ["t", 1040, 15, 1061, 14, "blue"], ["t", 1057, 27, 1061, 24, "gray"], ["c", 1061, 26, "red", "#e8b060", "#e8a8c8"], ["t", 1055, 18, 1042, 22, "olive", 18], ["c", 1037, 23, "violet"], ["t", 1027, 18, 1019, 18, "mix", 18], ["c", 1016, 20, "violet"],
  ["t", 960, 18, 970, 10, "mix", 20], ["t", 961, 28, 968, 6, "gray"], ["t", 969, 0, 975, 10, "gray", 21], ["c", 977, 11, "red"], ["t", 975, 46, 988, 32, "olive", 21], ["c", 998, 15, "orange"],
  ["t", 951, 55, 957, 50, "mix", 18], ["c", 946, 56, "violet"], ["t", 990, 51, 1002, 57, "blue", 18], ["t", 993, 47, 976, 54, "mix", 20], ["c", 1006, 61, "violet"], ["t", 972, 49, 974, 70, "gray", 20], ["t", 979, 58, 975, 78, "mix", 19], ["c", 975, 82, "red", "#f0e8dc", "#eee8e0", null],
  ["t", 252, 228, 272, 233, "mint", 20], ["t", 276, 212, 272, 230, "mint", 20], ["t", 270, 209, 272, 212, "blue", 19], ["c", 271, 211, "pink", "#c8ac80", "#f0e020"],
  ["t", 307, 210, 318, 218, "mint", 19], ["c", 306, 209, "rust"], ["t", 318, 225, 333, 224, "mint", 20], ["c", 312, 229, "rust"], ["t", 308, 235, 324, 247, "mint", 19], ["c", 308, 240, "pink"], ["t", 320, 252, 331, 260, "gray", 17], ["c", 332, 262, "rust", "#d8ac90", "#f020c0", "#181818"],
  ["t", 730, 582, 744, 602, "hot", 19], ["c", 736, 612, "lime", "#d07888", "#b0b060", null], ["t", 729, 581, 750, 602, "hot", 18], ["c", 732, 583, "pale", "#e04038", "#d89080", "#487c98"], ["t", 741, 595, 751, 597, "hot", 17], ["c", 755, 597, "lime", "#b02c60", "#d890c8", "#187820"]
];

for (const [layer, items] of [[behind, behindItems], [over, overItems]]) {
  for (const [kind, ...args] of items) (kind === "t" ? trail : coin)(layer, ...args);
}
```
